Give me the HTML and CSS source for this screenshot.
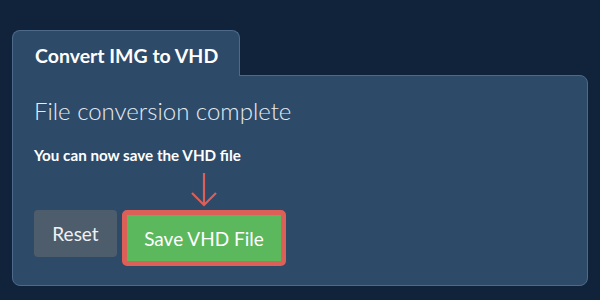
FILE: index.html
```html
<!DOCTYPE html>
<html lang="en">
<head>
    <meta charset="UTF-8">
    <title>Convert IMG to VHD</title>
    <link rel="stylesheet" href="styles.css">
</head>
<body>
    <div class="wrap">
        <div class="tab">Convert IMG to VHD</div>
        <div class="panel">
            <h3 class="status">File conversion complete</h3>
            <p class="hint">You can now save the VHD file</p>
            <div class="actions">
                <button class="btn btn-reset">Reset</button>
                <div class="save-col">
                    <svg class="arrow" width="30" height="36" viewBox="0 0 30 36">
                        <path d="M15 1 V33 M3 21 L15 33 L27 21" fill="none" stroke="#dc5f58" stroke-width="2.2"/>
                    </svg>
                    <button class="btn btn-save">Save VHD File</button>
                </div>
            </div>
        </div>
    </div>
</body>
</html>
```

FILE: styles.css
```css
body {
    margin: 0;
    background-color: #11233a;
    font-family: Lato, 'Open Sans', sans-serif;
    color: #fff;
}
.wrap {
    padding: 30px 12px 13px;
}
.tab {
    display: inline-block;
    position: relative;
    z-index: 1;
    margin-bottom: -1px;
    width: 228px;
    height: 46px;
    box-sizing: border-box;
    padding: 14px 0 0 22px;
    background-color: #2d4a69;
    border: 1px solid #4d6a8b;
    border-bottom: none;
    border-radius: 8px 8px 0 0;
    font-size: 19.5px;
    font-weight: bold;
    line-height: 22px;
}
.panel {
    background-color: #2d4a69;
    border: 1px solid #4d6a8b;
    border-radius: 0 8px 8px 8px;
    height: 211px;
    box-sizing: border-box;
    padding: 20px 21px 0;
}
.status {
    margin: 0;
    font-size: 24px;
    font-weight: 300;
    line-height: 30px;
    color: #e6ebf1;
}
.hint {
    margin: 20px 0 0;
    font-size: 15.2px;
    font-weight: bold;
    line-height: 18px;
}
.actions {
    display: flex;
    align-items: flex-end;
    gap: 5px;
    margin-top: 8px;
}
.save-col {
    display: flex;
    flex-direction: column;
    align-items: center;
}
.arrow {
    display: block;
    margin-bottom: 2px;
}
.btn {
    border: none;
    border-radius: 4px;
    color: #fff;
    font-family: Lato, sans-serif;
    font-size: 19px;
    cursor: pointer;
}
.btn-reset {
    width: 83px;
    height: 47px;
    align-self: flex-end;
    margin-bottom: 9px;
    background-color: #4e5d6c;
    color: #eef1f4;
}
.btn-save {
    width: 164px;
    height: 56px;
    background-color: #5cb85c;
    border: 5px solid #dc5f58;
    border-radius: 5px;
}
```
